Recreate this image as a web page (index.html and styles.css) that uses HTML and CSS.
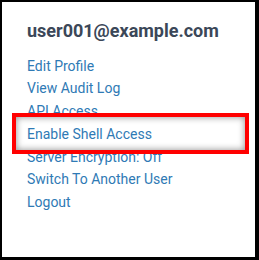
FILE: index.html
```html
<!DOCTYPE html>
<html lang="en">
<head>
    <meta charset="UTF-8">
    <meta name="viewport" content="width=device-width, initial-scale=1.0">
    <title>User menu</title>
    <link rel="stylesheet" href="styles.css">
</head>
<body>
    <div class="panel">
        <h2 class="user-name">user001@example.com</h2>
        <ul class="menu">
            <li><a href="#">Edit Profile</a></li>
            <li><a href="#">View Audit Log</a></li>
            <li><a href="#">API Access</a></li>
            <li class="highlight"><a href="#">Enable Shell Access</a></li>
            <li><a href="#">Server Encryption: Off</a></li>
            <li><a href="#">Switch To Another User</a></li>
            <li><a href="#">Logout</a></li>
        </ul>
    </div>
</body>
</html>
```

FILE: styles.css
```css
html, body {
    height: 100%;
}
body {
    margin: 0;
    padding: 2px 4px 3px 2px;
    box-sizing: border-box;
    background: #000;
    font-family: Roboto, "Liberation Sans", Arial, sans-serif;
}
.panel {
    height: 100%;
    background: #fff;
    padding: 19px 0 0 25px;
    box-sizing: border-box;
}
.user-name {
    margin: 0;
    font-size: 18px;
    font-weight: bold;
    line-height: 20px;
    color: #3b4758;
}
.menu {
    list-style: none;
    margin: 13.5px 0 0;
    padding: 0;
}
.menu li {
    font-size: 14px;
    line-height: 22.8px;
}
.menu a {
    color: #2f7ab5;
    text-decoration: none;
}
.highlight {
    position: relative;
}
.highlight::before {
    content: "";
    position: absolute;
    left: -15px;
    top: -10px;
    width: 237px;
    height: 41px;
    box-sizing: border-box;
    background: #fff;
    border: 4.5px solid #f00;
    box-shadow: inset 0 0 7px rgba(0, 0, 0, 0.45);
}
.highlight a {
    position: relative;
}
```
